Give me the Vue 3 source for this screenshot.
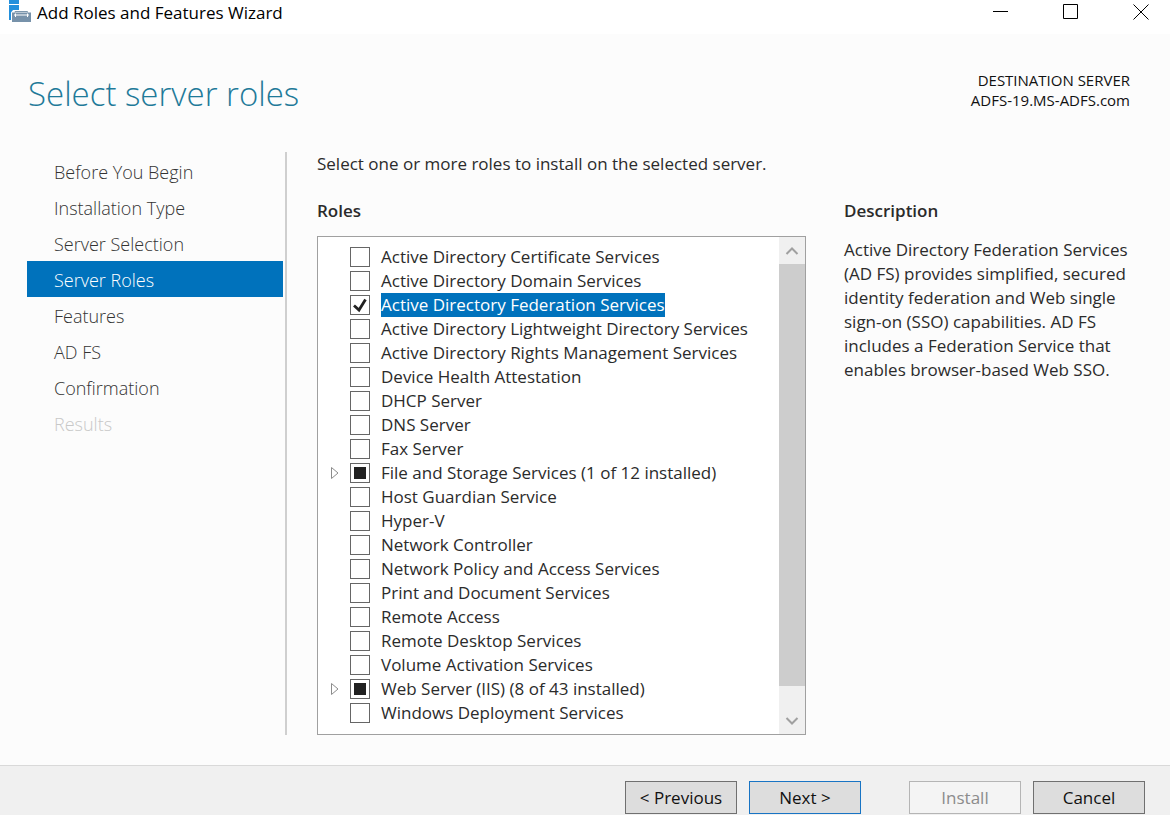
<script setup>
import { ref } from 'vue'

const steps = ref([
  { label: 'Before You Begin' },
  { label: 'Installation Type' },
  { label: 'Server Selection' },
  { label: 'Server Roles', active: true },
  { label: 'Features' },
  { label: 'AD FS' },
  { label: 'Confirmation' },
  { label: 'Results', disabled: true },
])

const roles = ref([
  { name: 'Active Directory Certificate Services' },
  { name: 'Active Directory Domain Services' },
  { name: 'Active Directory Federation Services', checked: true, selected: true },
  { name: 'Active Directory Lightweight Directory Services' },
  { name: 'Active Directory Rights Management Services' },
  { name: 'Device Health Attestation' },
  { name: 'DHCP Server' },
  { name: 'DNS Server' },
  { name: 'Fax Server' },
  { name: 'File and Storage Services (1 of 12 installed)', partial: true },
  { name: 'Host Guardian Service' },
  { name: 'Hyper-V' },
  { name: 'Network Controller' },
  { name: 'Network Policy and Access Services' },
  { name: 'Print and Document Services' },
  { name: 'Remote Access' },
  { name: 'Remote Desktop Services' },
  { name: 'Volume Activation Services' },
  { name: 'Web Server (IIS) (8 of 43 installed)', partial: true },
  { name: 'Windows Deployment Services' },
])
</script>

<template>
  <div class="wizard">
    <header class="titlebar">
      <svg class="logo" width="24" height="24" viewBox="0 0 24 24" aria-hidden="true">
        <path d="M1 0H11V4H1z M1 5H11V20H1z" fill="#2390dc" />
        <path d="M3 23V12.500L5 10H21L24 12.500V23z" fill="#fff" />
        <path d="M7 12.500V11.500H19.500V12.500" fill="none" stroke="#7d97ad" />
        <rect x="4" y="12.500" width="19" height="9.500" fill="#7792aa" />
        <path d="M6 15H21M7.500 13.500V17M19.500 13.500V17" fill="none" stroke="#fff" />
      </svg>
      <span class="window-name">Add Roles and Features Wizard</span>
      <div class="window-buttons">
        <button type="button" aria-label="Minimize">
          <svg width="16" height="16" viewBox="0 0 16 16"><path d="M0 7.500H15" stroke="#000" /></svg>
        </button>
        <button type="button" aria-label="Maximize">
          <svg width="16" height="16" viewBox="0 0 16 16"><path d="M.5 .5H14.500V14.500H.5z" fill="none" stroke="#000" /></svg>
        </button>
        <button type="button" aria-label="Close">
          <svg width="16" height="16" viewBox="0 0 16 16"><path d="M.5 .5L15.500 15.500M15.500 .5L.5 15.500" stroke="#000" /></svg>
        </button>
      </div>
    </header>

    <div class="heading">
      <h1>Select server roles</h1>
      <p class="destination">DESTINATION SERVER<br />ADFS-19.MS-ADFS.com</p>
    </div>

    <div class="body">
      <nav class="steps">
        <button
          v-for="step in steps"
          :key="step.label"
          type="button"
          :class="{ active: step.active }"
          :disabled="step.disabled"
        >{{ step.label }}</button>
      </nav>

      <main class="content">
        <p class="intro">Select one or more roles to install on the selected server.</p>
        <div class="columns">
          <section>
            <h2>Roles</h2>
            <div class="listbox">
              <ul class="roles">
                <li v-for="role in roles" :key="role.name">
                  <span class="expander">
                    <svg v-if="role.partial" width="8" height="14" viewBox="0 0 8 14" aria-hidden="true">
                      <path d="M.5 1.500L7 7L.5 12.500z" fill="#fff" stroke="#8c8c8c" />
                    </svg>
                  </span>
                  <label>
                    <span class="tick">
                      <input v-model="role.checked" type="checkbox" :indeterminate="role.partial" />
                      <svg v-if="role.checked" width="20" height="20" viewBox="0 0 20 20" aria-hidden="true">
                        <path d="M4 10.500L9 15L15.500 4.500" fill="none" stroke="#212121" stroke-width="2.800" />
                      </svg>
                    </span>
                    <span class="name" :class="{ selected: role.selected }">{{ role.name }}</span>
                  </label>
                </li>
              </ul>
              <div class="scrollbar">
                <button type="button" aria-label="Scroll up">
                  <svg width="14" height="10" viewBox="0 0 14 10"><path d="M1.500 8L7 2.500L12.500 8" fill="none" stroke="#a0a0a0" stroke-width="2" /></svg>
                </button>
                <div class="thumb"></div>
                <button type="button" class="down" aria-label="Scroll down">
                  <svg width="14" height="10" viewBox="0 0 14 10"><path d="M1.500 2L7 7.500L12.500 2" fill="none" stroke="#a0a0a0" stroke-width="2" /></svg>
                </button>
              </div>
            </div>
          </section>
          <section>
            <h2>Description</h2>
            <p class="description">Active Directory Federation Services (AD FS) provides simplified, secured identity federation and Web single sign-on (SSO) capabilities. AD FS includes a Federation Service that enables browser-based Web SSO.</p>
          </section>
        </div>
      </main>
    </div>

    <footer class="actions">
      <button type="button">&lt; Previous</button>
      <button type="button" class="primary">Next &gt;</button>
      <button type="button" class="install" disabled>Install</button>
      <button type="button">Cancel</button>
    </footer>
  </div>
</template>

<style>
body {
  margin: 0;
  background: #fcfcfc;
}
</style>

<style scoped>
.wizard {
  display: flex;
  flex-direction: column;
  min-height: 100vh;
  color: #2b2b2b;
  background: #fcfcfc;
  font-family: "Segoe UI", "Open Sans", "Noto Sans", sans-serif;
  font-size: 17px;
  line-height: 24px;
}
.wizard * {
  box-sizing: border-box;
}
h1, h2, p, ul {
  margin: 0;
  padding: 0;
}
button {
  padding: 0;
  border: 0;
  background: none;
  color: inherit;
  font: inherit;
}
svg {
  display: block;
}
.titlebar {
  display: flex;
  align-items: flex-start;
  height: 34px;
  padding-left: 8px;
  background: #fff;
  color: #000;
}
.window-name {
  margin-left: 5px;
  line-height: 26px;
}
.window-buttons {
  display: flex;
  gap: 54px;
  margin-left: auto;
  padding: 4px 21px 0 0;
}
.heading {
  display: flex;
  justify-content: space-between;
  padding: 36px 40px 0 28px;
}
h1 {
  color: #1f7a99;
  font-size: 33px;
  font-weight: 300;
  line-height: 48px;
}
.destination {
  color: #111;
  font-size: 15px;
  line-height: 20px;
  text-align: right;
}
.body {
  display: flex;
  flex: 1;
  padding: 34px 40px 30px 27px;
}
.steps {
  display: flex;
  flex-direction: column;
  width: 260px;
  padding: 1px 2px 0 0;
  border-right: 2px solid #cfcfcf;
}
.steps button {
  height: 36px;
  padding: 2px 0 0 27px;
  color: #333;
  font-size: 18px;
  font-weight: 300;
  text-align: left;
}
.steps button.active {
  background: #0072bc;
  color: #fff;
}
.steps button:disabled {
  color: #c8c8c8;
}
.content {
  flex: 1;
  min-width: 0;
  padding-left: 30px;
}
.columns {
  display: grid;
  grid-template-columns: minmax(0, 1fr) 286px;
  gap: 38px;
  margin-top: 23px;
}
h2 {
  margin-bottom: 13px;
  font-size: 17px;
  font-weight: 600;
  line-height: 24px;
}
.listbox {
  display: flex;
  border: 1px solid #a0a0a0;
  background: #fff;
}
.roles {
  flex: 1;
  padding: 8px 0 9px;
  list-style: none;
}
li {
  display: flex;
  height: 24px;
}
.expander {
  display: flex;
  align-items: center;
  width: 32px;
  padding-left: 13px;
}
label {
  display: flex;
  align-items: center;
  white-space: nowrap;
}
.tick {
  display: grid;
  margin-right: 11px;
}
.tick > * {
  grid-area: 1 / 1;
}
.tick svg {
  pointer-events: none;
}
input {
  width: 20px;
  height: 20px;
  margin: 0;
  appearance: none;
  border: 1px solid #666;
  background: #fff;
}
input:indeterminate {
  background: #212121;
  box-shadow: inset 0 0 0 3px #fff;
}
.name.selected {
  background: #0072bc;
  color: #fff;
}
.scrollbar {
  display: flex;
  flex-direction: column;
  width: 26px;
  background: #f0f0f0;
}
.scrollbar button {
  display: grid;
  place-items: center;
  height: 27px;
}
.scrollbar .down {
  margin-top: 21px;
}
.thumb {
  flex: 1;
  background: #cdcdcd;
}
.description {
  margin-top: 15px;
}
.actions {
  display: flex;
  justify-content: flex-end;
  gap: 12px;
  padding: 15px 25px 0 0;
  height: 50px;
  border-top: 1px solid #d9d9d9;
  background: #f0f0f0;
  color: #111;
}
.actions button {
  width: 112px;
  height: 33px;
  padding-top: 1px;
  border: 1px solid #707070;
  background: #ddd;
}
.actions .primary {
  border-color: #1874c4;
}
.actions .install {
  margin-left: 36px;
  border-color: #b5b5b5;
  background: #f4f4f4;
  color: #8c8c8c;
}
</style>
